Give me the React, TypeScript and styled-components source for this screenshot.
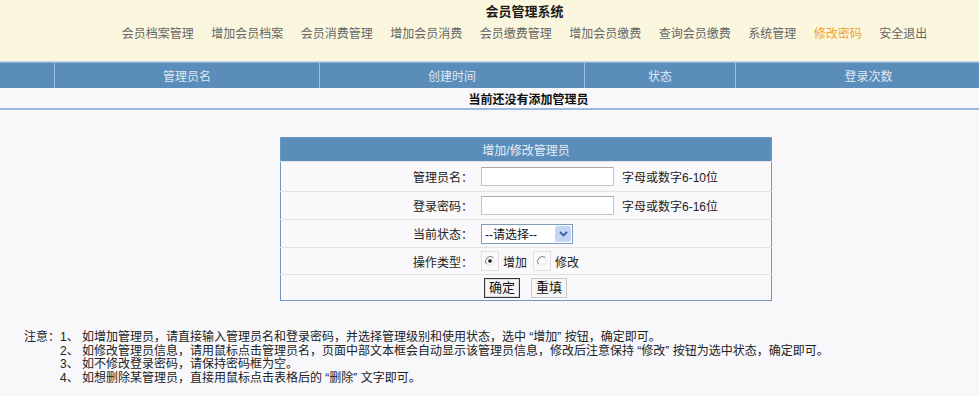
import React from 'react';
import styled, { createGlobalStyle } from 'styled-components';

const GlobalStyle = createGlobalStyle`
  html, body {
    margin: 0;
    padding: 0;
    background: #f8f8fb;
    font-family: 'Liberation Sans', 'Noto Sans CJK SC', sans-serif;
    font-size: 12px;
    color: #222;
    overflow: hidden;
  }
`;

const Header = styled.div`
  height: 62px;
  background: #fbf7de;
  border-bottom: 1px solid #c9d8ea;
  display: flex;
  flex-direction: column;
  align-items: center;
  padding-left: 70px;
  box-sizing: border-box;
`;

const Title = styled.div`
  margin-top: 4px;
  font-size: 13px;
  font-weight: bold;
  color: #1a1a1a;
  line-height: 16px;
`;

const Nav = styled.div`
  display: flex;
  gap: 17.5px;
  margin-top: 6px;
  line-height: 16px;
`;

const NavLink = styled.span<{ $active?: boolean }>`
  color: ${(p) => (p.$active ? '#f0a12c' : '#666')};
  white-space: nowrap;
`;

const TableWrap = styled.div`
  width: 979px;
  overflow: hidden;
`;

const ListTable = styled.table`
  width: 997px;
  border-collapse: collapse;
  table-layout: fixed;
`;

const Th = styled.th<{ $w: number }>`
  width: ${(p) => p.$w}px;
  height: 25px;
  padding: 0;
  background: #5a8dba;
  color: #dfe8f2;
  font-weight: normal;
  border-left: 1px solid #9fc0e0;
  border-top: 1px solid #8fb2d6;
  &:first-child {
    border-left: none;
  }
`;

const EmptyCell = styled.td`
  height: 20px;
  padding: 0 0 0 56px;
  text-align: center;
  font-weight: bold;
  color: #111;
  background: #f9f9fb;
  border-bottom: 2px solid #9cb7de;
`;

const Panel = styled.table`
  margin: 27px 0 0 280px;
  width: 492px;
  border-collapse: collapse;
  border: 1px solid #7096c4;
  background: #f9f9fb;
`;

const PanelHead = styled.th`
  height: 23px;
  padding: 0;
  background: #5a8dba;
  color: #e6edf5;
  font-weight: normal;
  text-align: center;
`;

const Row = styled.tr<{ $h: number }>`
  height: ${(p) => p.$h}px;
  border-top: 1px solid #e2e2e6;
`;

const LabelCell = styled.td`
  width: 192px;
  padding: 0 4px 0 0;
  text-align: right;
  color: #222;
`;

const ValueCell = styled.td`
  padding: 0 0 0 4px;
`;

const Field = styled.div`
  display: flex;
  align-items: center;
  gap: 8px;
`;

const Input = styled.input`
  width: 133px;
  height: 19px;
  box-sizing: border-box;
  border: 1px solid #c5c5c5;
  border-top-color: #a8a8a8;
  background: #fff;
  padding: 0 3px;
  font: inherit;
`;

const Hint = styled.span`
  color: #222;
`;

const Select = styled.div`
  display: flex;
  align-items: center;
  justify-content: space-between;
  width: 92px;
  height: 20px;
  box-sizing: border-box;
  border: 1px solid #7f9db9;
  background: #fff;
  padding: 0 1px 0 3px;
  color: #111;
`;

const SelectArrow = styled.span`
  display: flex;
  align-items: center;
  justify-content: center;
  width: 16px;
  height: 16px;
  background: #c3d5f4;
  border-radius: 2px;
`;

const Radios = styled.div`
  display: flex;
  align-items: center;
  gap: 4px;
`;

const RadioBox = styled.span`
  display: inline-flex;
  align-items: center;
  justify-content: center;
  width: 18px;
  height: 20px;
  box-sizing: border-box;
  border: 1px solid #e0e0e0;
  background: #fafafa;
`;

const RadioLabel = styled.span`
  margin-right: 2px;
`;

const Buttons = styled.div`
  display: flex;
  gap: 11px;
  padding-left: 3px;
`;

const Button = styled.button<{ $focus?: boolean }>`
  height: 20px;
  padding: 0 4px;
  font: inherit;
  font-size: 13px;
  line-height: 16px;
  color: #111;
  background: #f6f6f6;
  border: 1px solid ${(p) => (p.$focus ? '#333' : '#c8c8c8')};
  box-shadow: ${(p) => (p.$focus ? 'inset 0 0 0 1px #ddd' : 'none')};
`;

const Notes = styled.div`
  display: flex;
  margin-top: 30px;
  padding-left: 24px;
  line-height: 13.5px;
  color: #222;
`;

const NoteList = styled.div`
  display: flex;
  flex-direction: column;
`;

const Radio: React.FC<{ checked?: boolean }> = ({ checked }) => (
  <RadioBox>
    <svg width="12" height="12" viewBox="0 0 12 12">
      <path d="M9.5 2.5 A5 5 0 0 0 2.5 9.5" fill="none" stroke="#808080" strokeWidth="1" />
      <path d="M2.5 9.5 A5 5 0 0 0 9.5 2.5" fill="none" stroke="#e8e8e8" strokeWidth="1" />
      {checked && <circle cx="6" cy="6" r="1.8" fill="#111" />}
    </svg>
  </RadioBox>
);

const navItems = [
  '会员档案管理',
  '增加会员档案',
  '会员消费管理',
  '增加会员消费',
  '会员缴费管理',
  '增加会员缴费',
  '查询会员缴费',
  '系统管理',
  '修改密码',
  '安全退出',
];

const notes = [
  '1、 如增加管理员，请直接输入管理员名和登录密码，并选择管理级别和使用状态，选中 “增加” 按钮，确定即可。',
  '2、 如修改管理员信息，请用鼠标点击管理员名，页面中部文本框会自动显示该管理员信息，修改后注意保持 “修改” 按钮为选中状态，确定即可。',
  '3、 如不修改登录密码，请保持密码框为空。',
  '4、 如想删除某管理员，直接用鼠标点击表格后的 “删除” 文字即可。',
];

const App: React.FC = () => {
  return (
    <>
      <GlobalStyle />
      <Header>
        <Title>会员管理系统</Title>
        <Nav>
          {navItems.map((n) => (
            <NavLink key={n} $active={n === '修改密码'}>
              {n}
            </NavLink>
          ))}
        </Nav>
      </Header>

      <TableWrap>
        <ListTable>
          <thead>
            <tr>
              <Th $w={54}></Th>
              <Th $w={264}>管理员名</Th>
              <Th $w={264}>创建时间</Th>
              <Th $w={150}>状态</Th>
              <Th $w={265}>登录次数</Th>
            </tr>
          </thead>
          <tbody>
            <tr>
              <EmptyCell colSpan={5}>当前还没有添加管理员</EmptyCell>
            </tr>
          </tbody>
        </ListTable>
      </TableWrap>

      <Panel>
        <thead>
          <tr>
            <PanelHead colSpan={2}>增加/修改管理员</PanelHead>
          </tr>
        </thead>
        <tbody>
          <Row $h={30}>
            <LabelCell>管理员名：</LabelCell>
            <ValueCell>
              <Field>
                <Input />
                <Hint>字母或数字6-10位</Hint>
              </Field>
            </ValueCell>
          </Row>
          <Row $h={28}>
            <LabelCell>登录密码：</LabelCell>
            <ValueCell>
              <Field>
                <Input type="password" />
                <Hint>字母或数字6-16位</Hint>
              </Field>
            </ValueCell>
          </Row>
          <Row $h={28}>
            <LabelCell>当前状态：</LabelCell>
            <ValueCell>
              <Select>
                <span>--请选择--</span>
                <SelectArrow>
                  <svg width="9" height="6" viewBox="0 0 9 6">
                    <path d="M1 1 L4.5 4.5 L8 1" fill="none" stroke="#3d5fa8" strokeWidth="1.8" />
                  </svg>
                </SelectArrow>
              </Select>
            </ValueCell>
          </Row>
          <Row $h={27}>
            <LabelCell>操作类型：</LabelCell>
            <ValueCell>
              <Radios>
                <Radio checked />
                <RadioLabel>增加</RadioLabel>
                <Radio />
                <RadioLabel>修改</RadioLabel>
              </Radios>
            </ValueCell>
          </Row>
          <Row $h={26}>
            <td></td>
            <ValueCell>
              <Buttons>
                <Button $focus>确定</Button>
                <Button>重填</Button>
              </Buttons>
            </ValueCell>
          </Row>
        </tbody>
      </Panel>

      <Notes>
        <span>注意：</span>
        <NoteList>
          {notes.map((n) => (
            <span key={n}>{n}</span>
          ))}
        </NoteList>
      </Notes>
    </>
  );
};

export default App;
